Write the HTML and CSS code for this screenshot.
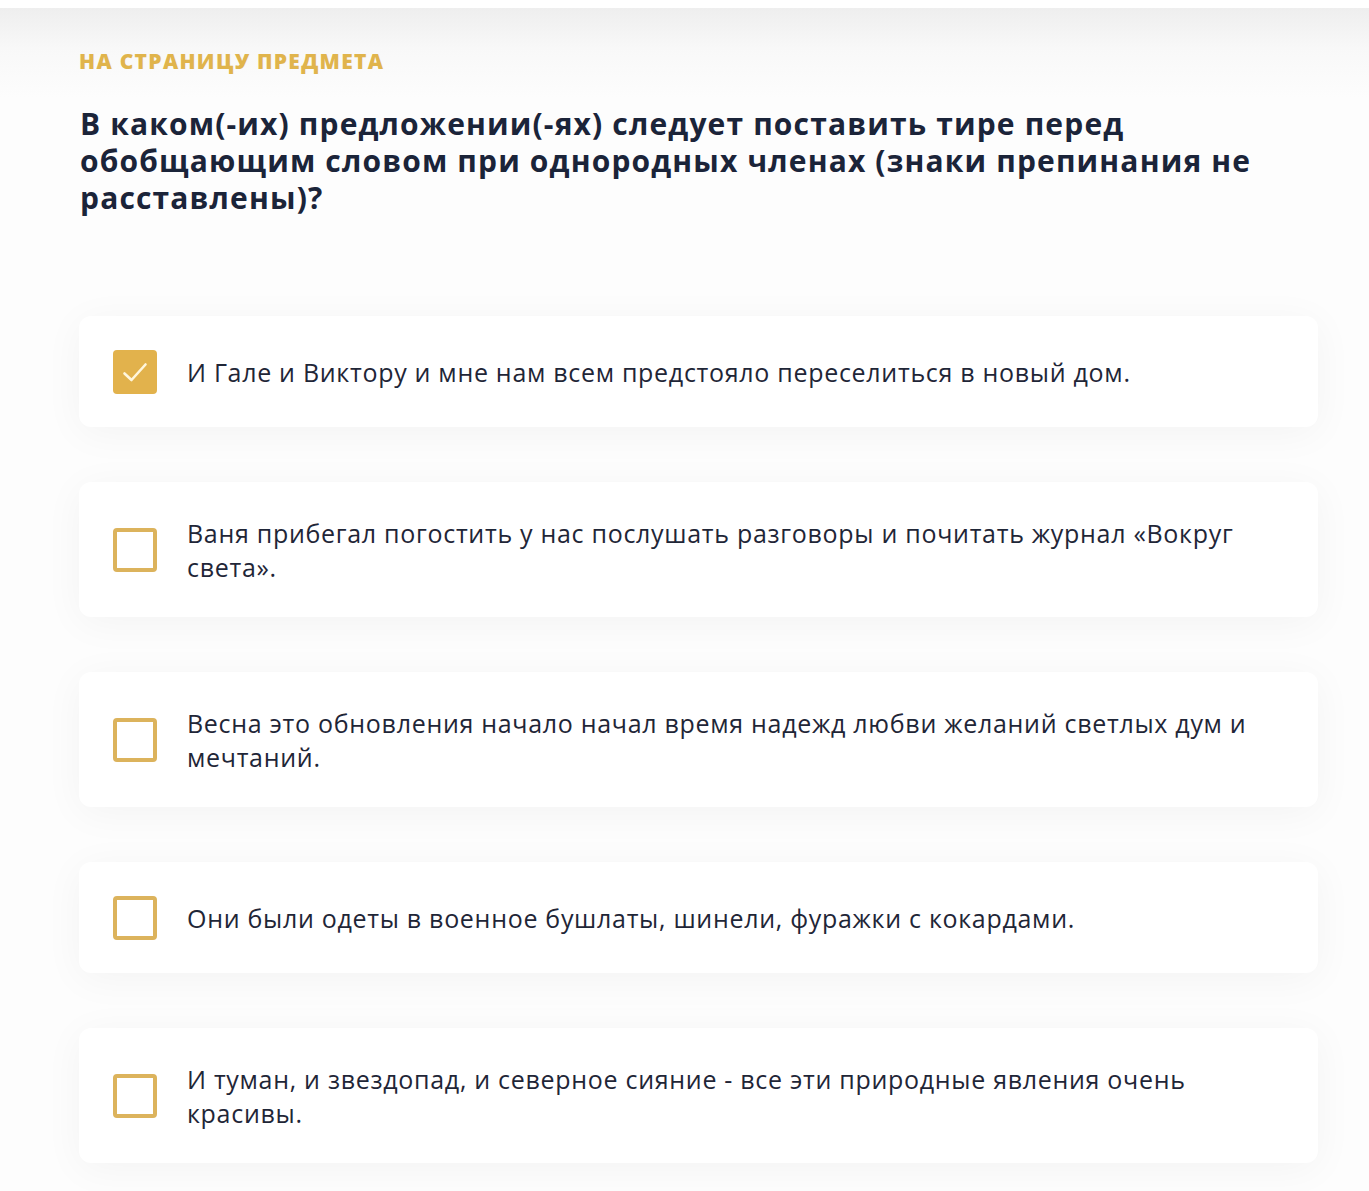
FILE: index.html
```html
<!DOCTYPE html>
<html lang="ru">
<head>
<meta charset="utf-8">
<title>Вопрос</title>
<link rel="stylesheet" href="styles.css">
</head>
<body>
<div class="topbar"></div>
<main class="page">
  <a class="back-link" href="#">НА СТРАНИЦУ ПРЕДМЕТА</a>
  <h1 class="question">В каком(-их) предложении(-ях) следует поставить тире перед обобщающим словом при однородных членах (знаки препинания не расставлены)?</h1>
  <ul class="answers">
    <li class="answer">
      <span class="box checked">
        <svg viewBox="0 0 44 44" width="44" height="44"><path d="M11.5 23.5 L18.5 30 L32.5 14.5" fill="none" stroke="#fff6dc" stroke-width="2.6" stroke-linecap="round" stroke-linejoin="round"/></svg>
      </span>
      <span class="text">И Гале и Виктору и мне нам всем предстояло переселиться в новый дом.</span>
    </li>
    <li class="answer">
      <span class="box"></span>
      <span class="text">Ваня прибегал погостить у нас послушать разговоры и почитать журнал «Вокруг света».</span>
    </li>
    <li class="answer">
      <span class="box"></span>
      <span class="text">Весна это обновления начало начал время надежд любви желаний светлых дум и мечтаний.</span>
    </li>
    <li class="answer">
      <span class="box"></span>
      <span class="text">Они были одеты в военное бушлаты, шинели, фуражки с кокардами.</span>
    </li>
    <li class="answer">
      <span class="box"></span>
      <span class="text">И туман, и звездопад, и северное сияние - все эти природные явления очень красивы.</span>
    </li>
  </ul>
</main>
</body>
</html>
```
FILE: styles.css
```css
* { box-sizing: border-box; }
html, body { margin: 0; padding: 0; }
body {
  background: #fdfdfd;
  font-family: "Open Sans", "Noto Sans", sans-serif;
  color: #1e2535;
}
.topbar {
  height: 8px;
  background: #ffffff;
}
.page {
  background: linear-gradient(#eeeeee 0px, #f8f8f8 40px, #fdfdfd 90px, #fdfdfd 100%);
  padding: 40px 51px 40px 79px;
  min-height: 1183px;
}
.back-link {
  display: block;
  font-family: "Open Sans", sans-serif;
  font-weight: 800;
  font-size: 21px;
  line-height: 26px;
  color: #e0b44c;
  text-decoration: none;
  letter-spacing: 1.3px;
}
.question {
  margin: 31px 0 0 1px;
  font-family: "Open Sans", sans-serif;
  font-weight: 700;
  font-size: 30px;
  line-height: 37px;
  letter-spacing: 1.15px;
  color: #1b2439;
  max-width: 1220px;
}
.answers {
  list-style: none;
  margin: 100px 0 0 0;
  padding: 0;
  display: flex;
  flex-direction: column;
  gap: 55px;
}
.answer {
  display: flex;
  align-items: center;
  gap: 30px;
  background: #ffffff;
  border-radius: 12px;
  padding: 33.5px 34px 33.5px 34px;
  box-shadow: 0 6px 40px rgba(0, 0, 0, 0.045);
}
.box {
  flex: 0 0 44px;
  width: 44px;
  height: 44px;
  border: 4px solid #dcb35c;
  border-radius: 4px;
  display: block;
}
.box.checked {
  border: none;
  background: #e2b24c;
}
.box svg { display: block; }
.text {
  font-size: 25px;
  line-height: 34px;
  letter-spacing: 0.7px;
  color: #1f2637;
}
```
